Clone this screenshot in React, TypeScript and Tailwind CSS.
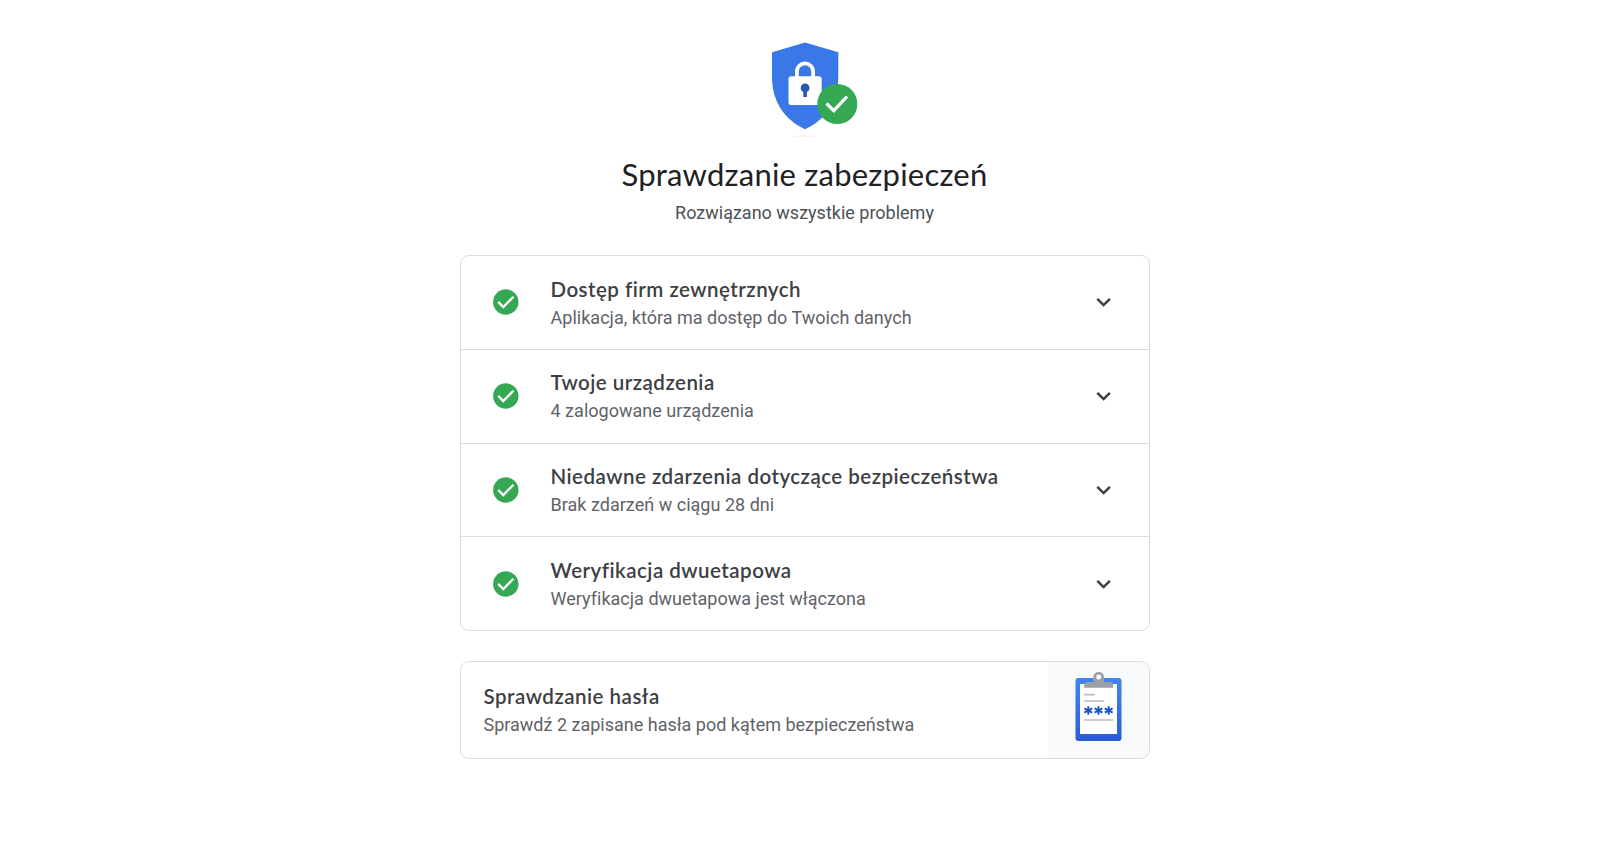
interface CheckItem {
  title: string;
  description: string;
}

const items: CheckItem[] = [
  { title: "Dostęp firm zewnętrznych", description: "Aplikacja, która ma dostęp do Twoich danych" },
  { title: "Twoje urządzenia", description: "4 zalogowane urządzenia" },
  { title: "Niedawne zdarzenia dotyczące bezpieczeństwa", description: "Brak zdarzeń w ciągu 28 dni" },
  { title: "Weryfikacja dwuetapowa", description: "Weryfikacja dwuetapowa jest włączona" },
];

function ShieldLogo() {
  return (
    <svg className="block h-[100px] w-[108px]" viewBox="751 40 108 100" fill="none">
      <path d="M805 42.600 838.300 52.200V77C838.300 101 826 119.500 805 129.300 784 119.500 772 101 772 77V52.200Z" fill="#3b78e7" />
      <path d="M796.900 78V71.500a8.100 8.100 0 0 1 16.200 0V78" stroke="#fff" strokeWidth="3.800" />
      <rect x="788.500" y="76.300" width="33.200" height="28.800" rx="3.200" fill="#fff" />
      <path d="M805.100 83.500a4.400 4.400 0 0 1 1.800 8.400v5h-3.600v-5a4.400 4.400 0 0 1 1.800-8.400Z" fill="#2a56b4" />
      <circle cx="837.300" cy="104" r="20" fill="#34a853" />
      <path d="m826.500 103.500 7.300 7.200 13.200-14.200" stroke="#fff" strokeWidth="3.200" />
      <ellipse cx="804" cy="136.200" rx="12" ry="0.600" fill="#eee" />
    </svg>
  );
}

function CheckBadge() {
  return (
    <svg className="h-[26px] w-[26px] shrink-0" viewBox="0 0 26 26" fill="none">
      <circle cx="12.800" cy="13" r="12.700" fill="#34a853" />
      <path d="m5.200 12.900 5.100 5.100L20.500 7.700" stroke="#fff" strokeWidth="2.300" />
    </svg>
  );
}

function Chevron() {
  return (
    <svg className="h-[10px] w-4 shrink-0" viewBox="0 0 16 10" fill="none">
      <path d="m1.300 1.800 6.300 6.300 6.300-6.300" stroke="#3c4043" strokeWidth="2.500" />
    </svg>
  );
}

function Asterisk({ x }: { x: number }) {
  return (
    <path
      transform={`translate(${x} 710.500)`}
      d="M0-4.300V4.300M-3.900-2.200 3.900 2.200M-3.900 2.200 3.900-2.200"
      stroke="#1a57c0"
      strokeWidth="1.900"
    />
  );
}

function Clipboard() {
  return (
    <svg className="h-[72px] w-[48px]" viewBox="1074.500 671 48 72" fill="none">
      <defs>
        <linearGradient id="board" x1="0" y1="0" x2="0" y2="1">
          <stop offset="0" stopColor="#4285f4" />
          <stop offset="1" stopColor="#2a5bd7" />
        </linearGradient>
      </defs>
      <rect x="1075" y="678" width="46" height="63" rx="3" fill="url(#board)" />
      <path d="M1079.500 684h37v50h-37z" fill="#fff" />
      <path d="M1083.700 687.700v-2.200a3.500 3.500 0 0 1 3.500-3.500h5.700v-5a5.300 5.300 0 0 1 10.600 0v5h5.700a3.500 3.500 0 0 1 3.500 3.500v2.200Z" fill="#9aa0a6" />
      <circle cx="1098.200" cy="677" r="2.500" fill="#f8f9fa" />
      <path d="M1083.700 694.700h10.500M1083.700 701h19.700M1083.700 720h29" stroke="#bdbdc1" strokeWidth="1.700" />
      <Asterisk x={1087.8} />
      <Asterisk x={1098} />
      <Asterisk x={1108.2} />
    </svg>
  );
}

export default function App() {
  return (
    <main className="flex h-[867px] flex-col items-center bg-white pt-10 pr-[4px] font-['Roboto',sans-serif]">
      <ShieldLogo />
      <h1 className="mt-[14px] font-['Lato',sans-serif] text-[31px] leading-10 tracking-[0.22px] text-[#202124]">
        Sprawdzanie zabezpieczeń
      </h1>
      <p className="mt-[5px] text-[18px] leading-7 text-[#4d5156]">Rozwiązano wszystkie problemy</p>

      <section className="mt-7 h-[376px] w-[690px] divide-y divide-[#dadce0] rounded-[9px] border border-[#dadce0]">
        {items.map((item) => (
          <div key={item.title} className="flex h-[93.75px] items-center pr-[37px] pl-8">
            <CheckBadge />
            <div className="ml-8 flex-1 pt-[3.5px]">
              <h2 className="-mt-px mb-px font-['Lato',sans-serif] text-[20.5px] leading-[27px] font-semibold tracking-[0.48px] text-[#3c4043]">
                {item.title}
              </h2>
              <p className="text-[18px] leading-7 tracking-[0.02px] text-[#5f6368]">{item.description}</p>
            </div>
            <Chevron />
          </div>
        ))}
      </section>

      <section className="mt-[30px] flex h-[98px] w-[690px] overflow-hidden rounded-[9px] border border-[#dadce0]">
        <div className="flex-1 pt-5 pl-[23px]">
          <h2 className="mb-px font-['Lato',sans-serif] text-[20.5px] leading-7 font-semibold tracking-[0.5px] text-[#3c4043]">
            Sprawdzanie hasła
          </h2>
          <p className="text-[18px] leading-7 text-[#5f6368]">Sprawdź 2 zapisane hasła pod kątem bezpieczeństwa</p>
        </div>
        <div className="flex w-[101px] justify-center bg-[#f8f9fa] pt-[9px] pl-px">
          <Clipboard />
        </div>
      </section>
    </main>
  );
}
